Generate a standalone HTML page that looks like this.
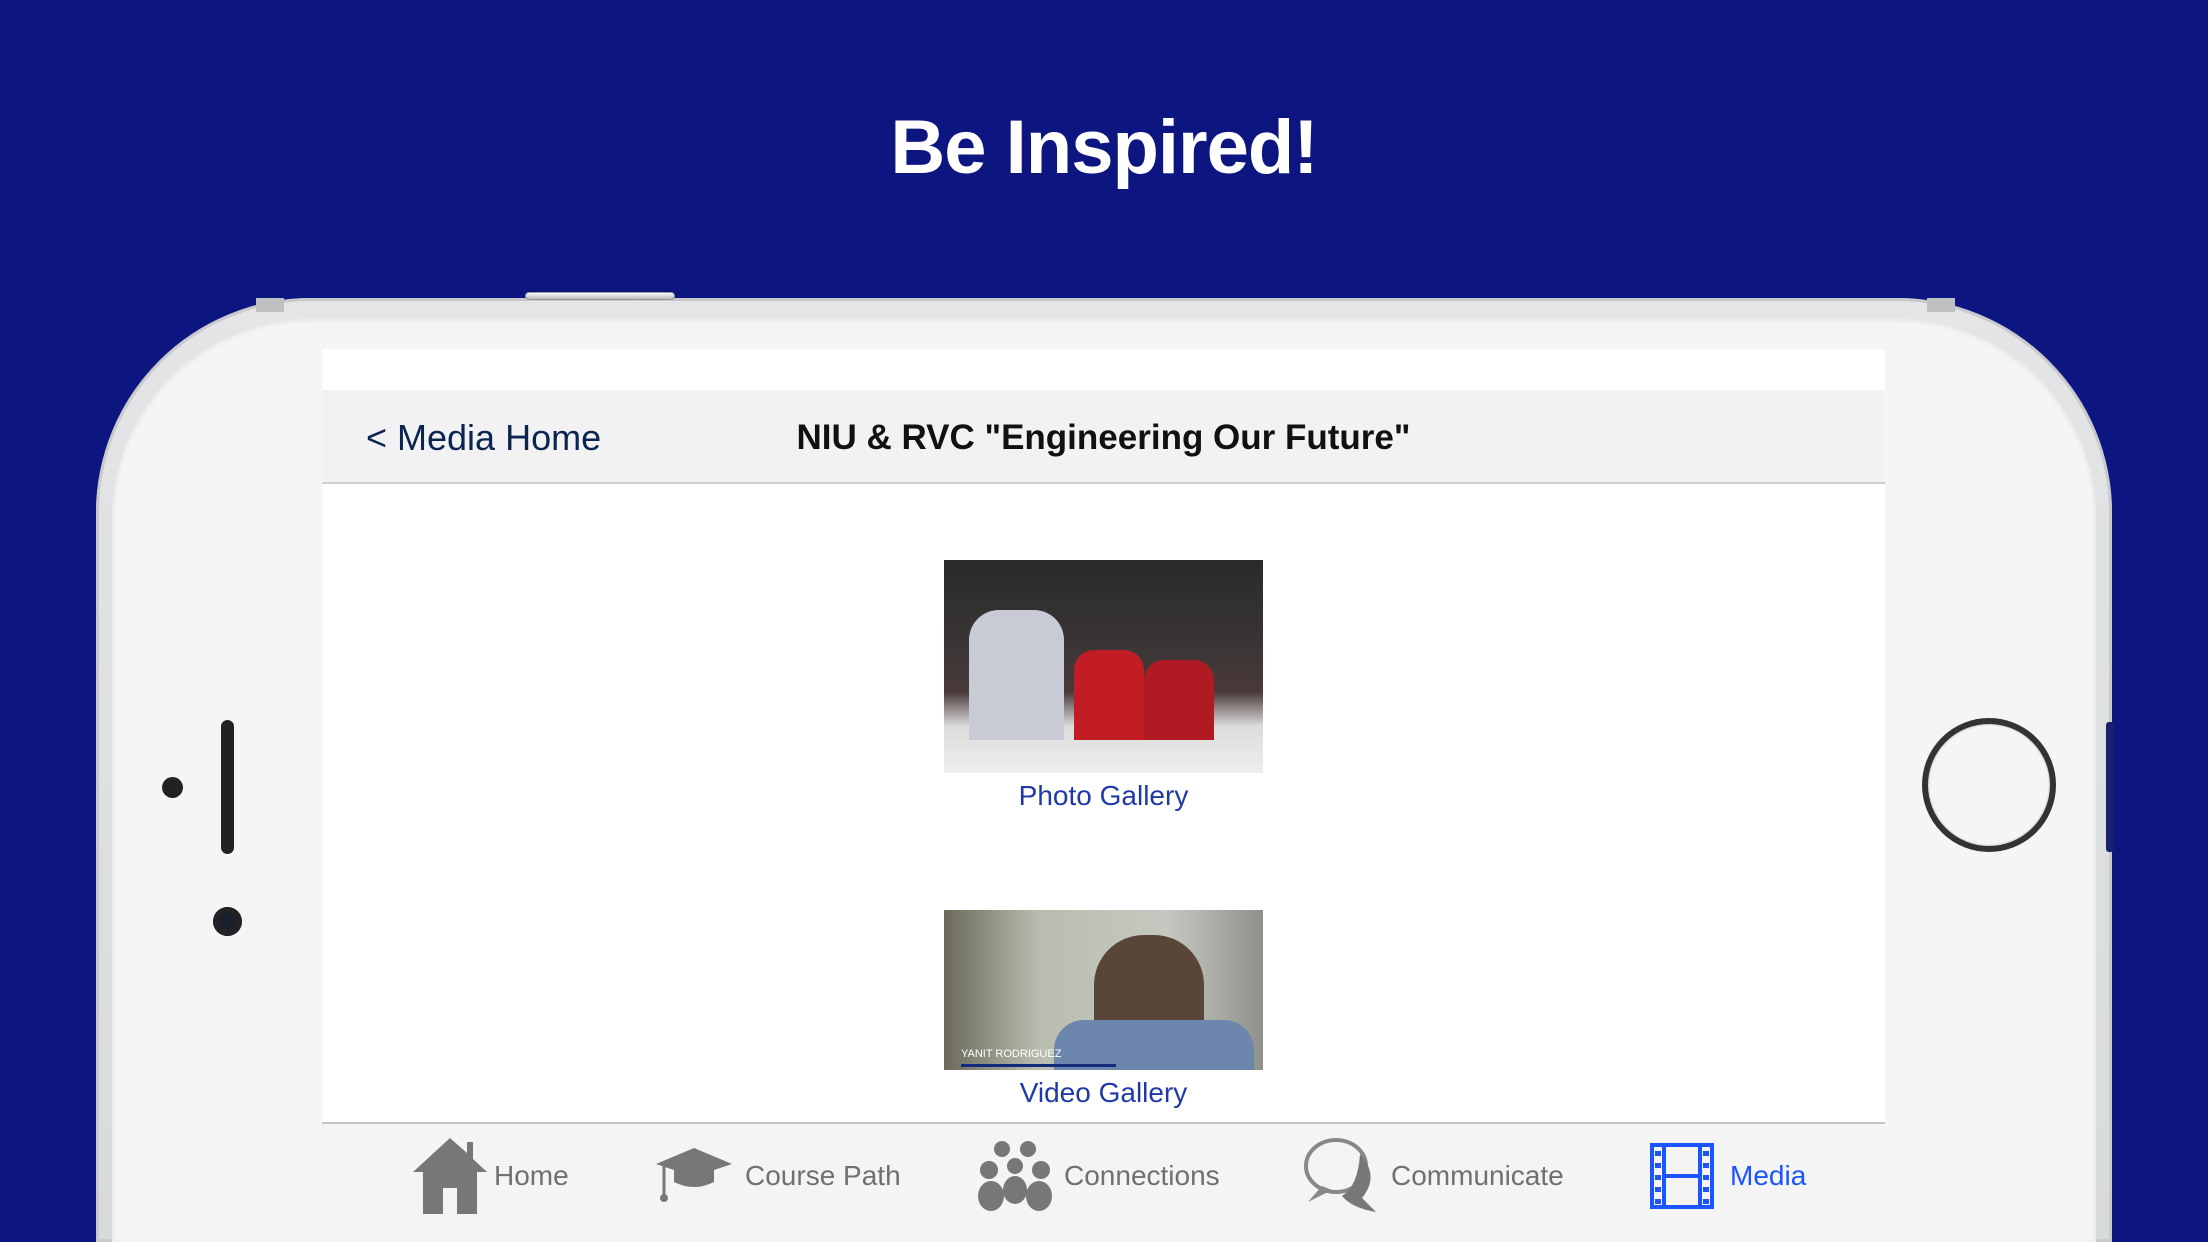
<!DOCTYPE html>
<html><head><meta charset="utf-8"><style>
*{margin:0;padding:0;box-sizing:border-box}
html,body{width:2208px;height:1242px;overflow:hidden}
body{background:#0c1580;font-family:"Liberation Sans",sans-serif;position:relative}
#wrap{position:absolute;left:0;top:0;width:2208px;height:1242px;overflow:hidden}
.abs{position:absolute}
h1{position:absolute;left:0;width:2208px;top:104px;text-align:center;color:#fff;font-size:76px;font-weight:bold;letter-spacing:-1px}
.phone{left:96px;top:298px;width:2016px;height:944px;border-radius:215px 215px 0 0;background:linear-gradient(#e4e5e7,#d9dadc);box-shadow:inset 0 0 0 3px #c9cacc}
.inner{left:112px;top:318px;width:1984px;height:924px;border-radius:200px 200px 0 0;background:#f4f5f7;box-shadow:inset 0 2px 6px rgba(0,0,0,.08)}
.screen{left:322px;top:349px;width:1563px;height:893px;background:#fff}
.nav{left:322px;top:390px;width:1563px;height:94px;background:#f2f2f2;border-bottom:2px solid #cfcfcf}
.tab{left:322px;top:1122px;width:1563px;height:120px;background:#f4f4f4;border-top:2px solid #c4c4c4}
.tl{position:absolute;top:1160px;font-size:28px;color:#707070}
</style></head><body><div id="wrap">
<h1>Be Inspired!</h1>
<div class="abs phone"></div>
<div class="abs" style="left:256px;top:298px;width:28px;height:14px;background:#bfc0c2"></div>
<div class="abs" style="left:1927px;top:298px;width:28px;height:14px;background:#bfc0c2"></div>
<div class="abs" style="left:525px;top:292px;width:150px;height:8px;border-radius:4px;background:linear-gradient(#fafafa,#bbb);border:1px solid #999"></div>
<div class="abs" style="left:2106px;top:722px;width:8px;height:130px;border-radius:3px;background:#1a2070"></div>
<div class="abs inner"></div>
<div class="abs screen"></div>
<div class="abs nav"></div>
<div class="abs" style="left:366px;top:417px;font-size:36px;color:#0b2550">&lt; Media Home</div>
<div class="abs" style="left:322px;width:1563px;top:418px;text-align:center;font-size:35px;font-weight:bold;color:#111">NIU &amp; RVC "Engineering Our Future"</div>
<div class="abs" style="left:944px;top:560px;width:319px;height:213px;background:linear-gradient(180deg,#2a2a2a 0%,#3a3535 40%,#4a3a3a 62%,#dcdcdc 78%,#eee 100%)">
 <div class="abs" style="left:130px;top:90px;width:70px;height:90px;background:#c21c24;border-radius:20px 20px 0 0"></div>
 <div class="abs" style="left:200px;top:100px;width:70px;height:80px;background:#b01a22;border-radius:20px 20px 0 0"></div>
 <div class="abs" style="left:25px;top:50px;width:95px;height:130px;background:#c8cbd6;border-radius:30px 30px 0 0"></div>
</div>
<div class="abs" style="left:944px;width:319px;top:780px;text-align:center;font-size:28px;color:#1f3aa8">Photo Gallery</div>
<div class="abs" style="left:944px;top:910px;width:319px;height:160px;overflow:hidden;background:linear-gradient(90deg,#6b6a5a,#b9bdb0 30%,#c4c8c0 70%,#8f908a)">
 <div class="abs" style="left:150px;top:25px;width:110px;height:135px;background:#5a4638;border-radius:50px 50px 10px 10px"></div>
 <div class="abs" style="left:110px;top:110px;width:200px;height:50px;background:#6c86ad;border-radius:30px 30px 0 0"></div>
 <div class="abs" style="left:17px;top:138px;font-size:11px;color:#fff">YANIT RODRIGUEZ</div>
 <div class="abs" style="left:17px;top:154px;width:155px;height:3px;background:#132a7a"></div>
</div>
<div class="abs" style="left:944px;width:319px;top:1077px;text-align:center;font-size:28px;color:#1f3aa8">Video Gallery</div>
<div class="abs tab"></div>
<svg class="abs" style="left:413px;top:1138px" width="74" height="76" viewBox="0 0 74 76"><path d="M37 0 L0 34 L10 34 L10 76 L30 76 L30 50 L44 50 L44 76 L64 76 L64 34 L74 34 L60 21 L60 4 L54 4 L54 15 Z" fill="#777"/></svg>
<div class="tl" style="left:494px">Home</div>
<svg class="abs" style="left:656px;top:1148px" width="76" height="58" viewBox="0 0 76 58"><path d="M38 0 L76 16 L58 22 L58 34 Q38 44 18 34 L18 22 L0 16 Z" fill="#777"/><path d="M8 18 L8 48" stroke="#777" stroke-width="3"/><circle cx="8" cy="50" r="4" fill="#777"/></svg>
<div class="tl" style="left:745px">Course Path</div>
<svg class="abs" style="left:977px;top:1140px" width="76" height="74" viewBox="0 0 76 74" fill="#777"><circle cx="25" cy="9" r="8"/><circle cx="51" cy="9" r="8"/><circle cx="38" cy="26" r="8"/><circle cx="12" cy="30" r="9"/><circle cx="64" cy="30" r="9"/><ellipse cx="38" cy="50" rx="12" ry="14"/><ellipse cx="14" cy="56" rx="13" ry="15"/><ellipse cx="62" cy="56" rx="13" ry="15"/></svg>
<div class="tl" style="left:1064px">Connections</div>
<svg class="abs" style="left:1302px;top:1136px" width="78" height="78" viewBox="0 0 78 78"><ellipse cx="34" cy="30" rx="30" ry="26" fill="none" stroke="#888" stroke-width="4"/><path d="M20 50 L6 66 L30 54 Z" fill="#888"/><path d="M58 18 Q78 40 60 62 Q70 72 74 76 Q50 72 40 60 Q56 50 58 18Z" fill="#777"/></svg>
<div class="tl" style="left:1391px">Communicate</div>
<svg class="abs" style="left:1650px;top:1143px" width="64" height="66" viewBox="0 0 64 66"><rect x="2" y="2" width="60" height="62" fill="none" stroke="#1a55ff" stroke-width="4"/><path d="M14 2V64M50 2V64M14 33H50" stroke="#1a55ff" stroke-width="4"/><g fill="#1a55ff"><rect x="5" y="8" width="6" height="5"/><rect x="5" y="20" width="6" height="5"/><rect x="5" y="32" width="6" height="5"/><rect x="5" y="44" width="6" height="5"/><rect x="5" y="56" width="6" height="5"/><rect x="53" y="8" width="6" height="5"/><rect x="53" y="20" width="6" height="5"/><rect x="53" y="32" width="6" height="5"/><rect x="53" y="44" width="6" height="5"/><rect x="53" y="56" width="6" height="5"/></g></svg>
<div class="tl" style="left:1730px;color:#1a55ff">Media</div>
<div class="abs" style="left:221px;top:720px;width:13px;height:134px;border-radius:7px;background:#222"></div>
<div class="abs" style="left:162px;top:777px;width:21px;height:21px;border-radius:50%;background:#222"></div>
<div class="abs" style="left:213px;top:907px;width:29px;height:29px;border-radius:50%;background:#1a1f2e;box-shadow:inset 0 0 0 6px #222"></div>
<div class="abs" style="left:1922px;top:718px;width:134px;height:134px;border-radius:50%;border:6px solid #333;box-shadow:inset 0 0 2px #999"></div>
</div></body></html>
